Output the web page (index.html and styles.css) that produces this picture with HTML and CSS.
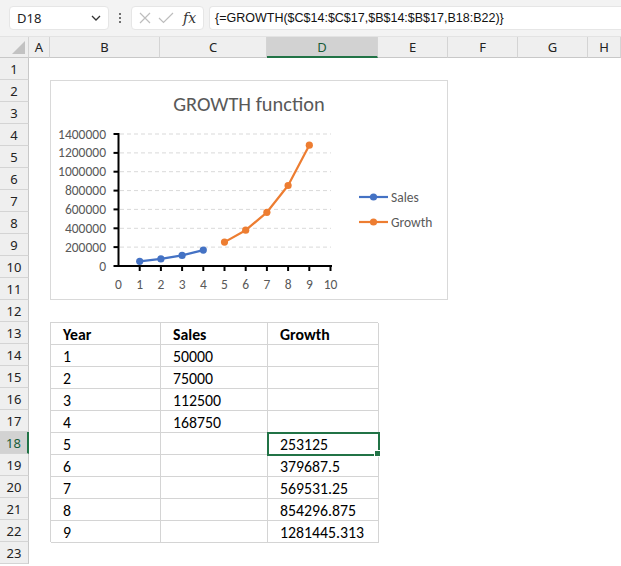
FILE: index.html
```html
<!DOCTYPE html>
<html>
<head>
<meta charset="utf-8">
<link rel="stylesheet" href="styles.css">
</head>
<body>
<div class="topbar">
  <div class="namebox"><span class="name">D18</span>
    <svg class="chev" width="10" height="6" viewBox="0 0 10 6"><path d="M1 1 L5 5 L9 1" fill="none" stroke="#333" stroke-width="1.3"/></svg>
  </div>
  <div class="dots"><span></span><span></span><span></span></div>
  <div class="fbtns">
    <svg width="12" height="12" viewBox="0 0 12 12"><path d="M1 1 L11 11 M11 1 L1 11" stroke="#bdbdbd" stroke-width="1.2" fill="none"/></svg>
    <svg width="16" height="12" viewBox="0 0 16 12"><path d="M1 6 L5.5 10.5 L15 1" stroke="#bdbdbd" stroke-width="1.2" fill="none"/></svg>
    <span class="fx">fx</span>
  </div>
  <div class="formula">{=GROWTH($C$14:$C$17,$B$14:$B$17,B18:B22)}</div>
</div>
<div class="sheet">
  <div class="corner"><span class="tri"></span></div>
  <div class="ch">A</div><div class="ch">B</div><div class="ch">C</div><div class="ch sel">D</div><div class="ch">E</div><div class="ch">F</div><div class="ch">G</div><div class="ch">H</div>
  <div class="rh r1">1</div><div class="rh r2">2</div><div class="rh r3">3</div><div class="rh r4">4</div><div class="rh r5">5</div><div class="rh r6">6</div><div class="rh r7">7</div><div class="rh r8">8</div><div class="rh r9">9</div><div class="rh r10">10</div><div class="rh r11">11</div><div class="rh r12">12</div><div class="rh r13">13</div><div class="rh r14">14</div><div class="rh r15">15</div><div class="rh r16">16</div><div class="rh r17">17</div><div class="rh r18 sel">18</div><div class="rh r19">19</div><div class="rh r20">20</div><div class="rh r21">21</div><div class="rh r22">22</div><div class="rh r23">23</div>

  <div class="chart">
    <svg width="398" height="220" viewBox="0 0 398 220">
      <rect x="0.5" y="0.5" width="397" height="219" fill="#fff" stroke="#d9d9d9"/>
      <text x="199" y="31" class="title" text-anchor="middle">GROWTH function</text>
      <g stroke="#d9d9d9" stroke-dasharray="4 3" stroke-width="1">
        <line x1="70" y1="167.1" x2="281" y2="167.1"/>
        <line x1="70" y1="148.3" x2="281" y2="148.3"/>
        <line x1="70" y1="129.4" x2="281" y2="129.4"/>
        <line x1="70" y1="110.6" x2="281" y2="110.6"/>
        <line x1="70" y1="91.7" x2="281" y2="91.7"/>
        <line x1="70" y1="72.9" x2="281" y2="72.9"/>
        <line x1="70" y1="54" x2="281" y2="54"/>
      </g>
      <g stroke="#000" stroke-width="2">
        <line x1="68.5" y1="53" x2="68.5" y2="187"/>
        <line x1="67.5" y1="186" x2="282" y2="186"/>
        <line x1="63.5" y1="186" x2="68.5" y2="186"/>
        <line x1="63.5" y1="167.1" x2="68.5" y2="167.1"/>
        <line x1="63.5" y1="148.3" x2="68.5" y2="148.3"/>
        <line x1="63.5" y1="129.4" x2="68.5" y2="129.4"/>
        <line x1="63.5" y1="110.6" x2="68.5" y2="110.6"/>
        <line x1="63.5" y1="91.7" x2="68.5" y2="91.7"/>
        <line x1="63.5" y1="72.9" x2="68.5" y2="72.9"/>
        <line x1="63.5" y1="54" x2="68.5" y2="54"/>
        <line x1="89.7" y1="186" x2="89.7" y2="191"/>
        <line x1="110.9" y1="186" x2="110.9" y2="191"/>
        <line x1="132.1" y1="186" x2="132.1" y2="191"/>
        <line x1="153.3" y1="186" x2="153.3" y2="191"/>
        <line x1="174.5" y1="186" x2="174.5" y2="191"/>
        <line x1="195.7" y1="186" x2="195.7" y2="191"/>
        <line x1="216.9" y1="186" x2="216.9" y2="191"/>
        <line x1="238.1" y1="186" x2="238.1" y2="191"/>
        <line x1="259.3" y1="186" x2="259.3" y2="191"/>
        <line x1="280.5" y1="186" x2="280.5" y2="191"/>
      </g>
      <g class="lbl" text-anchor="end">
        <text x="56" y="190.5">0</text>
        <text x="56" y="171.6">200000</text>
        <text x="56" y="152.8">400000</text>
        <text x="56" y="133.9">600000</text>
        <text x="56" y="115.1">800000</text>
        <text x="56" y="96.2">1000000</text>
        <text x="56" y="77.4">1200000</text>
        <text x="56" y="58.5">1400000</text>
      </g>
      <g class="lbl" text-anchor="middle">
        <text x="68.5" y="208.5">0</text>
        <text x="89.7" y="208.5">1</text>
        <text x="110.9" y="208.5">2</text>
        <text x="132.1" y="208.5">3</text>
        <text x="153.3" y="208.5">4</text>
        <text x="174.5" y="208.5">5</text>
        <text x="195.7" y="208.5">6</text>
        <text x="216.9" y="208.5">7</text>
        <text x="238.1" y="208.5">8</text>
        <text x="259.3" y="208.5">9</text>
        <text x="280.5" y="208.5">10</text>
      </g>
      <polyline points="89.7,181.3 110.9,178.9 132.1,175.4 153.3,170.1" fill="none" stroke="#4472c4" stroke-width="2.2" stroke-linejoin="round"/>
      <g fill="#4472c4">
        <circle cx="89.7" cy="181.3" r="3.6"/><circle cx="110.9" cy="178.9" r="3.6"/><circle cx="132.1" cy="175.4" r="3.6"/><circle cx="153.3" cy="170.1" r="3.6"/>
      </g>
      <polyline points="174.5,162.1 195.7,150.2 216.9,132.3 238.1,105.5 259.3,65.2" fill="none" stroke="#ed7d31" stroke-width="2.2" stroke-linejoin="round"/>
      <g fill="#ed7d31">
        <circle cx="174.5" cy="162.1" r="3.6"/><circle cx="195.7" cy="150.2" r="3.6"/><circle cx="216.9" cy="132.3" r="3.6"/><circle cx="238.1" cy="105.5" r="3.6"/><circle cx="259.3" cy="65.2" r="3.6"/>
      </g>
      <line x1="309" y1="117" x2="338" y2="117" stroke="#4472c4" stroke-width="2.2"/>
      <circle cx="323.5" cy="117" r="3.6" fill="#4472c4"/>
      <text x="341" y="121.5" class="lbl">Sales</text>
      <line x1="309" y1="142" x2="338" y2="142" stroke="#ed7d31" stroke-width="2.2"/>
      <circle cx="323.5" cy="142" r="3.6" fill="#ed7d31"/>
      <text x="341" y="146.5" class="lbl">Growth</text>
    </svg>
  </div>

  <div class="tbl">
    <div class="c b">Year</div><div class="c b">Sales</div><div class="c b">Growth</div>
    <div class="c">1</div><div class="c">50000</div><div class="c"></div>
    <div class="c">2</div><div class="c">75000</div><div class="c"></div>
    <div class="c">3</div><div class="c">112500</div><div class="c"></div>
    <div class="c">4</div><div class="c">168750</div><div class="c"></div>
    <div class="c">5</div><div class="c"></div><div class="c active">253125</div>
    <div class="c">6</div><div class="c"></div><div class="c">379687.5</div>
    <div class="c">7</div><div class="c"></div><div class="c">569531.25</div>
    <div class="c">8</div><div class="c"></div><div class="c">854296.875</div>
    <div class="c">9</div><div class="c"></div><div class="c">1281445.313</div>
  </div>
</div>
</body>
</html>
```
FILE: styles.css
```css
html, body { margin: 0; padding: 0; background: #fff; }
body { width: 621px; height: 566px; overflow: hidden; font-family: "Carlito", "Lato", sans-serif; }

.topbar {
  height: 37px;
  box-sizing: border-box;
  background: #f3f3f3;
  display: flex;
  align-items: flex-start;
  padding-top: 6px;
  padding-left: 9px;
  border-bottom: 1px solid #e3e3e3;
}
.namebox {
  width: 100px; height: 24px; box-sizing: border-box;
  background: #fff; border-radius: 4px; border: 1px solid #e6e6e6;
  display: flex; align-items: center; justify-content: space-between;
  padding: 0 7px 0 7px;
}
.name { font-family: "Noto Sans", sans-serif; font-size: 13px; color: #222; }
.dots { width: 22px; height: 24px; display: flex; flex-direction: column; align-items: center; justify-content: center; gap: 2px; }
.dots span { width: 2px; height: 2px; background: #444; border-radius: 1px; }
.fbtns {
  width: 73px; height: 24px; box-sizing: border-box;
  background: #fff; border-radius: 4px; border: 1px solid #e6e6e6;
  display: flex; align-items: center; padding-left: 7px; gap: 7px;
}
.fx { font-family: "DejaVu Serif", "Liberation Serif", serif; font-style: italic; font-size: 14px; color: #333; margin-left: 2px; }
.formula {
  margin-left: 5px; flex: 1; height: 24px; box-sizing: border-box;
  background: #fff; border-radius: 4px 0 0 4px; border: 1px solid #e6e6e6; border-right: none;
  font-family: "Liberation Sans", sans-serif; font-size: 12.5px; color: #111;
  display: flex; align-items: center; padding-left: 5px; white-space: nowrap;
}

.sheet {
  display: grid;
  grid-template-columns: 29px 21px 110px 107px 111px 70px 70px 70px 33px;
  grid-template-rows: 21px repeat(23, 22px);
}
.corner { grid-row: 1; grid-column: 1; background: #efefef; border-right: 1px solid #d4d4d4; border-bottom: 1px solid #c8c8c8; box-sizing: border-box; position: relative; }
.tri { position: absolute; right: 3px; bottom: 3px; width: 0; height: 0; border-left: 13px solid transparent; border-bottom: 13px solid #c2c2c2; }
.ch {
  grid-row: 1; background: #efefef; box-sizing: border-box;
  border-right: 1px solid #d4d4d4; border-bottom: 1px solid #c8c8c8;
  font-family: "Noto Sans", sans-serif; font-size: 13px; color: #222;
  display: flex; align-items: center; justify-content: center;
}
.ch.sel { background: #d2d2d2; color: #185c37; border-bottom: 2px solid #217346; }
.rh {
  grid-column: 1; background: #efefef; box-sizing: border-box;
  border-right: 1px solid #c8c8c8; border-bottom: 1px solid #d4d4d4;
  font-family: "Noto Sans", sans-serif; font-size: 13px; color: #222;
  display: flex; align-items: center; justify-content: center;
}
.rh.sel { background: #d2d2d2; color: #185c37; border-right: 2px solid #217346; }
.r1 { grid-row: 2; } .r2 { grid-row: 3; } .r3 { grid-row: 4; } .r4 { grid-row: 5; } .r5 { grid-row: 6; }
.r6 { grid-row: 7; } .r7 { grid-row: 8; } .r8 { grid-row: 9; } .r9 { grid-row: 10; } .r10 { grid-row: 11; }
.r11 { grid-row: 12; } .r12 { grid-row: 13; } .r13 { grid-row: 14; } .r14 { grid-row: 15; } .r15 { grid-row: 16; }
.r16 { grid-row: 17; } .r17 { grid-row: 18; } .r18 { grid-row: 19; } .r19 { grid-row: 20; } .r20 { grid-row: 21; }
.r21 { grid-row: 22; } .r22 { grid-row: 23; } .r23 { grid-row: 24; }

.chart { grid-column: 3 / 7; grid-row: 3 / 13; }
.chart svg { display: block; }
.title { font-family: "Carlito", "Lato", sans-serif; font-size: 20.4px; fill: #595959; }
.lbl { font-family: "Carlito", "Lato", sans-serif; font-size: 13.5px; fill: #595959; }

.tbl {
  grid-column: 3 / 6; grid-row: 14 / 24;
  display: grid;
  grid-template-columns: 110px 107px 111px;
  grid-template-rows: repeat(10, 22px);
  border-left: 1px solid #d4d4d4; border-top: 1px solid #d4d4d4;
}
.c {
  box-sizing: border-box;
  border-right: 1px solid #d4d4d4; border-bottom: 1px solid #d4d4d4;
  font-size: 15.8px; color: #000; padding-left: 12px; padding-top: 1px;
  display: flex; align-items: center;
}
.c.b { font-weight: bold; }
.c.active { outline: 2px solid #217346; outline-offset: -1px; position: relative; }
.c.active::after { content: ""; position: absolute; right: -3px; bottom: -3px; width: 5px; height: 5px; background: #217346; border: 1px solid #fff; }
```
